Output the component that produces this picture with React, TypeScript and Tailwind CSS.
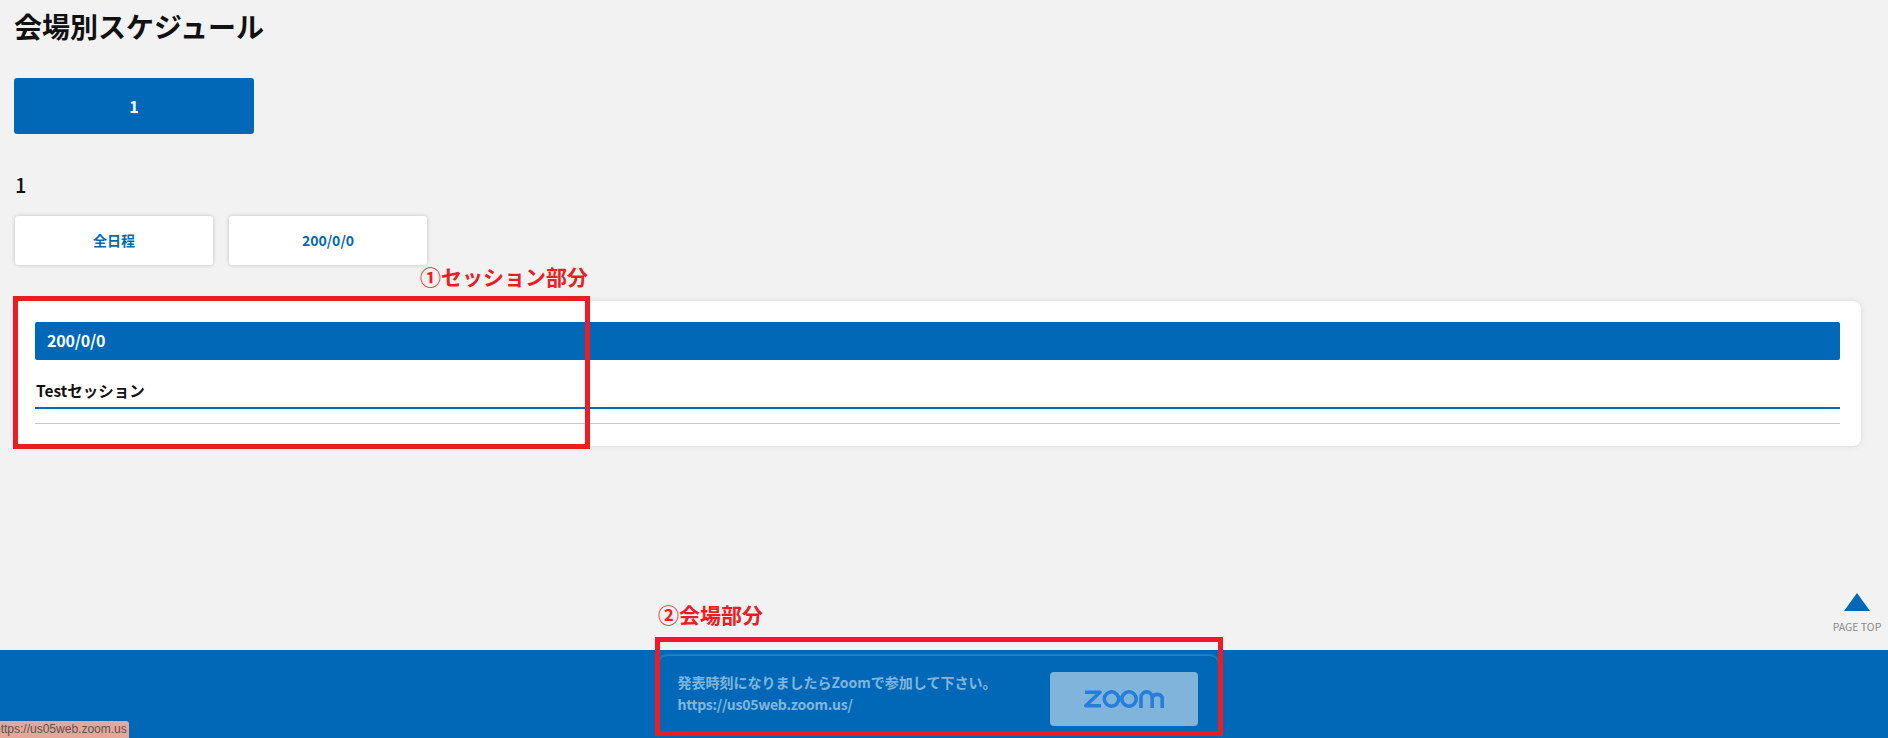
const BLUE_TABS = ['全日程', '200/0/0'];

function ZoomLogo() {
    return (
        <svg width="80" height="18" viewBox="0 0 80 18" fill="none" stroke="#4c94ff" strokeWidth="3.6" aria-label="zoom">
            <path d="M1 2.2H16L1.8 15.8H17" strokeLinejoin="round" />
            <circle cx="27.5" cy="9" r="7.2" />
            <circle cx="45" cy="9" r="7.2" />
            <path d="M57 18V7.5a5.6 5.6 0 0 1 11.2 0V18M68.2 7.5a5.6 5.6 0 0 1 10 0V18" />
        </svg>
    );
}

export default function App() {
    return (
        <div className="relative flex h-[738px] w-full flex-col overflow-hidden bg-[#f2f2f2] font-['Noto_Sans_CJK_JP','Liberation_Sans',sans-serif] text-[#111]">
            <main className="flex-1 pl-[14px] pr-[27px]">
                <h1 className="mt-[6px] h-[40px] text-[28px] leading-[40px] font-bold">会場別スケジュール</h1>

                <button className="mt-[32px] block h-[56px] w-[240px] rounded-[3px] bg-[#0068b7] text-[16px] font-bold text-white">
                    1
                </button>

                <h2 className="mt-[36px] h-[30px] pl-px text-[20px] leading-[30px] font-medium">1</h2>

                <div className="mt-[16px] flex gap-[16px] pl-px">
                    {BLUE_TABS.map((tab) => (
                        <button
                            key={tab}
                            className="h-[49px] w-[198px] rounded-[3px] bg-white text-[14px] font-bold text-[#0068b7] shadow-[0_0_4px_rgba(0,0,0,0.2)]"
                        >
                            {tab}
                        </button>
                    ))}
                </div>

                <section className="mt-[36px] h-[145px] rounded-[8px] bg-white px-[21px] pt-[21px] shadow-[0_0_6px_rgba(0,0,0,0.1)]">
                    <div className="h-[38px] rounded-[2px] bg-[#0068b7] pl-[12px] text-[16px] leading-[37px] font-bold tracking-[-0.2px] text-white">
                        200/0/0
                    </div>
                    <div className="mt-[18px] h-[31px] border-b-2 border-[#0068b7] pl-[1px] text-[15.5px] leading-[24px] font-bold">
                        Testセッション
                    </div>
                    <div className="mt-[14px] h-px bg-[#c8c8c8]" />
                </section>
            </main>

            <footer className="flex h-[88px] justify-center bg-[#0068b7]">
                <div className="mt-[6px] ml-[-12px] flex h-[82px] w-[559px] items-start justify-between rounded-t-[8px] pt-[16px] pr-[20px] pl-[19px] opacity-50 shadow-[0_-1px_3px_rgba(255,255,255,0.5)]">
                    <p className="mt-[-1px] text-[14px] leading-[22px] font-bold text-white">
                        発表時刻になりましたらZoomで参加して下さい。
                        <br />
                        <span className="tracking-[-0.25px]">https://us05web.zoom.us/</span>
                    </p>
                    <div className="flex h-[54px] w-[148px] items-center justify-center rounded-[4px] bg-white">
                        <ZoomLogo />
                    </div>
                </div>
            </footer>

            {/* annotations drawn over the screenshot */}
            <span className="absolute top-[262px] left-[420px] text-[21px] leading-[28px] font-bold text-[#ed1c24]">①セッション部分</span>
            <div className="absolute top-[296px] left-[13px] h-[153px] w-[577px] border-[5px] border-[#ed1c24]" />
            <span className="absolute top-[600px] left-[658px] text-[21px] leading-[28px] font-bold text-[#ed1c24]">②会場部分</span>
            <div className="absolute top-[637px] left-[655px] h-[99px] w-[568px] border-[5px] border-[#ed1c24]" />

            <div className="absolute top-[593px] right-[7px] flex w-[48px] flex-col items-center">
                <div className="h-0 w-0 border-x-[13px] border-b-[18px] border-x-transparent border-b-[#0068b7]" />
                <span className="mt-[9px] text-[10.5px] leading-[14px] whitespace-nowrap text-[#888]">PAGE TOP</span>
            </div>

            <div className="absolute bottom-0 left-0 h-[17px] w-[129px] overflow-hidden rounded-tr-[3px] bg-[#e3a898] font-['Liberation_Sans',sans-serif] text-[12px] leading-[17px] whitespace-nowrap text-[#555]">
                <span className="ml-[-6px] block">https://us05web.zoom.us</span>
            </div>
        </div>
    );
}
